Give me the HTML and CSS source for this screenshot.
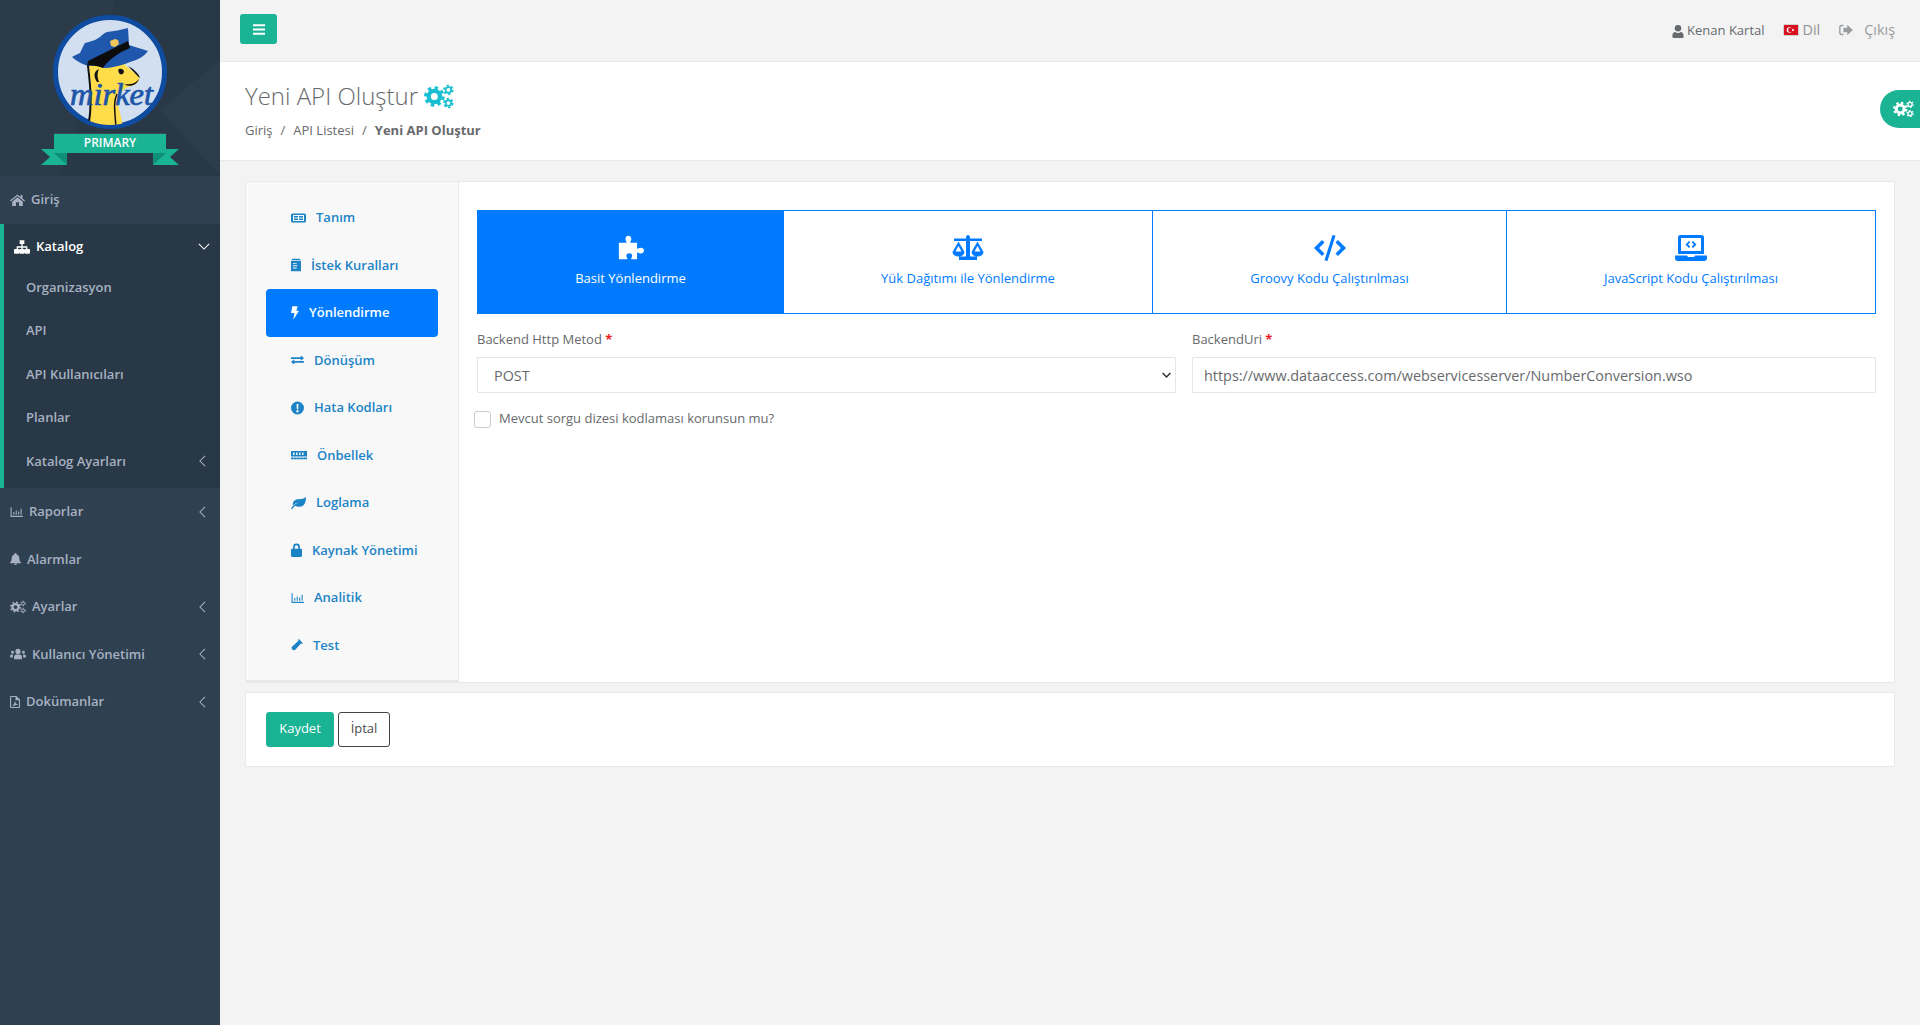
FILE: index.html
```html
<!DOCTYPE html>
<html lang="tr">
<head>
<meta charset="utf-8">
<title>Yeni API Oluştur</title>
<link rel="stylesheet" href="styles.css">
</head>
<body>
<svg class="sprite" xmlns="http://www.w3.org/2000/svg">
  <symbol id="i-home" viewBox="0 0 24 20"><path d="M12 1 0 10.800l1.300 1.600L12 3.600l10.700 8.800 1.300-1.600-4-3.300V2h-3v3.100zM12 5.600 3.500 12.600V19.500h6v-6h5v6h6v-6.900z"/></symbol>
  <symbol id="i-sitemap" viewBox="0 0 24 20"><path d="M8.500 0h7v5.500h-2.500V9H20v4h2.500a1.500 1.500 0 0 1 1.500 1.500v4a1.500 1.500 0 0 1-1.500 1.500h-5a1.500 1.500 0 0 1-1.500-1.500v-4a1.500 1.500 0 0 1 1.500-1.500H18v-2h-5v2h1.500a1.500 1.500 0 0 1 1.500 1.500v4a1.500 1.500 0 0 1-1.500 1.500h-5A1.500 1.500 0 0 1 8 18.500v-4A1.500 1.500 0 0 1 9.500 13H11v-2H6v2h.5A1.500 1.500 0 0 1 8 14.500v4A1.500 1.500 0 0 1 6.500 20h-5A1.500 1.500 0 0 1 0 18.500v-4A1.500 1.500 0 0 1 1.500 13H4V9h7V5.500H8.500z"/></symbol>
  <symbol id="i-chart" viewBox="0 0 24 20"><path d="M1 1h2v16h21v2H1zM6 10h2v5H6zM10.500 7h2v8h-2zM15 9h2v6h-2zM19.500 4h2v11h-2z"/></symbol>
  <symbol id="i-bell" viewBox="0 0 20 22"><path d="M10 0a2 2 0 0 0-2 2v.8A7 7 0 0 0 3 9.500c0 5.500-2 6.500-3 8V18.500h20v-1c-1-1.500-3-2.500-3-8a7 7 0 0 0-5-6.700V2a2 2 0 0 0-2-2zM7.500 19.500a2.500 2.500 0 0 0 5 0z"/></symbol>
  <symbol id="i-cogs" viewBox="0 0 32 26">
    <g fill="none" stroke="currentColor">
      <circle cx="11" cy="13" r="6" stroke-width="4.500"/>
      <circle cx="11" cy="13" r="9.300" stroke-width="3.400" stroke-dasharray="3.650 3.650"/>
      <circle cx="26" cy="6" r="3" stroke-width="1.900"/>
      <circle cx="26" cy="6" r="4.700" stroke-width="1.800" stroke-dasharray="2.460 2.460"/>
      <circle cx="26" cy="20" r="3" stroke-width="1.900"/>
      <circle cx="26" cy="20" r="4.700" stroke-width="1.800" stroke-dasharray="2.460 2.460"/>
    </g>
  </symbol>
  <symbol id="i-users" viewBox="0 0 28 20"><circle cx="14" cy="5.500" r="4.500"/><path d="M7 16.500C7 12 9.500 11 11 11h6c1.500 0 4 1 4 5.500V19H7z"/><circle cx="4.500" cy="7" r="2.500"/><circle cx="23.500" cy="7" r="2.500"/><path d="M0 15c0-3 1.500-4 3-4h2.500C4.500 12 5.300 13.500 5 16H1a1 1 0 0 1-1-1zM28 15c0-3-1.500-4-3-4h-2.500c1 1 .2 2.500.500 5h4a1 1 0 0 0 1-1z"/></symbol>
  <symbol id="i-pdf" viewBox="0 0 18 22"><path fill-rule="evenodd" d="M2 0h9.500L18 6.500V20a2 2 0 0 1-2 2H2a2 2 0 0 1-2-2V2a2 2 0 0 1 2-2zm0 2v18h14V8h-6V2z"/><path d="M4 18c2-1 3.500-3.500 4.500-7 .3-1.200 1.500-1 1.300.5-.2 1.500 2 3.500 4.200 3.500v1.300c-3 0-5.500.5-8.500 2.500z"/></symbol>
  <symbol id="i-bars" viewBox="0 0 14 12"><path d="M0 0h14v2.200H0zM0 4.900h14v2.200H0zM0 9.800h14V12H0z"/></symbol>
  <symbol id="i-user" viewBox="0 0 14 16"><circle cx="7" cy="4" r="4"/><path d="M0 14c0-3.500 1.500-5.500 3.500-5.500 1 .8 2.200 1.200 3.500 1.200s2.500-.4 3.500-1.200c2 0 3.500 2 3.500 5.500a2 2 0 0 1-2 2H2a2 2 0 0 1-2-2z"/></symbol>
  <symbol id="i-signout" viewBox="0 0 16 14"><path d="M5 1H3a3 3 0 0 0-3 3v6a3 3 0 0 0 3 3h2v-1.600H3A1.400 1.400 0 0 1 1.600 10V4A1.400 1.400 0 0 1 3 2.600h2zM9.500 1 16 7l-6.500 6V9.500H5v-5h4.500z"/></symbol>
  <symbol id="i-card" viewBox="0 0 30 20"><path fill-rule="evenodd" d="M3 1h24a3 3 0 0 1 3 3v12a3 3 0 0 1-3 3H3a3 3 0 0 1-3-3V4a3 3 0 0 1 3-3zM4 4v12h22V4zM6 6h8v3H6zM6 11h8v3H6zM16 6h8v3h-8zM16 11h8v3h-8z"/></symbol>
  <symbol id="i-book" viewBox="0 0 16 20"><path d="M2 0h12l1 2H1zM0 3h16v17H0zM3 7v1.500h6V7zM3 10.500V12h7v-1.500zM3 14v1.500h6V14z" fill-rule="evenodd"/></symbol>
  <symbol id="i-bolt" viewBox="0 0 12 20"><path d="M2 0h8L8 6.500h4L3.500 20 5 10H0z"/></symbol>
  <symbol id="i-exchange" viewBox="0 0 24 20"><path d="M0 5h18V1.500L24 6.500l-6 5V8H0zM24 12H6V8.500L0 13.500l6 5V15h18z"/></symbol>
  <symbol id="i-alert" viewBox="0 0 20 20"><path fill-rule="evenodd" d="M10 0a10 10 0 1 1 0 20 10 10 0 0 1 0-20zM8.500 4l.4 8h2.200l.4-8zM10 13.200a1.800 1.800 0 1 0 0 3.600 1.800 1.800 0 0 0 0-3.600z"/></symbol>
  <symbol id="i-memory" viewBox="0 0 32 18"><path fill-rule="evenodd" d="M0 1h32v11H0zM4 4v5h3V4zM10 4v5h3V4zM16 4v5h3V4zM22 4v5h3V4zM0 14h32v3.500H0zM5 14v1.500h1.500V14zM11 14v1.500h1.500V14zM17 14v1.500h1.500V14zM23 14v1.500h1.500V14z"/></symbol>
  <symbol id="i-leaf" viewBox="0 0 24 20"><path d="M24 0c0 8-2 16-11 16-2.500 0-4.500-.7-6-1.800C5 15.500 3 17.500 1.700 20L0 19c2.500-5 7-8.500 13-10-4.500.5-8 2.500-10 4.500C2 8 6 4 12 4c5 0 9-1 12-4z"/></symbol>
  <symbol id="i-lock" viewBox="0 0 16 20"><path d="M3 8V5.500a5 5 0 0 1 10 0V8h1.500A1.500 1.500 0 0 1 16 9.500v9a1.500 1.500 0 0 1-1.500 1.500h-13A1.500 1.500 0 0 1 0 18.500v-9A1.500 1.500 0 0 1 1.500 8zm2.500 0h5V5.500a2.500 2.500 0 0 0-5 0z"/></symbol>
  <symbol id="i-vial" viewBox="0 0 20 20"><path d="M13 0l7 7-1.800 1.200L17 7 7.500 17.500a3.700 3.700 0 0 1-5.300-5.200L12.500 3 11.500 1.800z"/></symbol>
  <symbol id="i-puzzle" viewBox="0 0 30 30"><path d="M1 9h8c1 0 1-1 .3-2C8 5 8.500 1 12 1s4 4 2.700 6c-.7 1-.7 2 .3 2h7v6c0 1 1 1 2 .3 2-1.300 6-.8 6 2.700s-4 4-6 2.700c-1-.7-2-.7-2 .3v7h-6c-1 0-1-1-.3-2 1.300-2 .8-5-2.700-5s-4 3-2.700 5c.7 1 .7 2-.3 2H1z"/></symbol>
  <symbol id="i-scale" viewBox="0 0 32 26"><path fill-rule="evenodd" d="M14.500 3.500a2 2 0 1 1 3 0H30v2.500H18V21.500h7V25H7v-3.500h7V6H2V3.500zM6.500 6.500 12.500 17a6 4.500 0 0 1-12 0zM3.500 16.500h6L6.500 11zM25.500 6.500 31.500 17a6 4.500 0 0 1-12 0zM22.500 16.500h6l-3-5.500z"/></symbol>
  <symbol id="i-code" viewBox="0 0 32 26"><path d="M8 5 0 13l8 8 2.500-2.500L5 13l5.500-5.500zM24 5l8 8-8 8-2.500-2.500L27 13l-5.500-5.500zM18.500 0l3 .8L13.500 26l-3-.8z"/></symbol>
  <symbol id="i-laptop" viewBox="0 0 32 26"><path fill-rule="evenodd" d="M5.500 0h21A2.500 2.500 0 0 1 29 2.500V19H3V2.500A2.500 2.500 0 0 1 5.500 0zM6 3v13h20V3zM0 20.500h12l1 1.500h6l1-1.500h12V23a3 3 0 0 1-3 3H3a3 3 0 0 1-3-3zM14 6 10.500 9.500 14 13l1.300-1.300-2.200-2.200 2.200-2.200zM18 6l3.500 3.500L18 13l-1.300-1.300 2.200-2.200-2.200-2.200z"/></symbol>
  <symbol id="i-chev-left" viewBox="0 0 8 14"><path d="M7 1 1 7l6 6" fill="none" stroke="currentColor" stroke-width="1.200"/></symbol>
  <symbol id="i-chev-down" viewBox="0 0 14 8"><path d="M1 1l6 6 6-6" fill="none" stroke="currentColor" stroke-width="1.200"/></symbol>
</svg>

<div class="app">
  <aside class="sidebar">
    <div class="brand">
      <svg class="brand-logo" viewBox="0 0 220 176" xmlns="http://www.w3.org/2000/svg">
        <defs><clipPath id="disc"><circle cx="110" cy="72" r="53"/></clipPath></defs>
        <path d="M115 0 60 176H0V0z" fill="#2b3b4a"/>
        <path d="M220 60 160 110 220 176z" fill="#2c3c4b"/>
        <circle cx="110" cy="72" r="54.500" fill="#d1dff0" stroke="#0e4ca1" stroke-width="5"/>
        <g clip-path="url(#disc)">
          <path d="M89 66C92 90 92 110 88 128H123C121 112 116 104 118 95 122 90 127 87 131 86 136 85 140 81 139 77 134 72 128 68 122 62z" fill="#fedc4a"/>
          <path d="M88 66C91 90 92 108 88 128" fill="none" stroke="#111" stroke-width="2"/>
          <path d="M116 128C115 112 113 102 117 94" fill="none" stroke="#111" stroke-width="1.500"/>
          <path d="M119 69c3-1 5 1 5 3-1 3-4 3-5 1-1-2-1-3 0-4zM128 66c6 3 11 8 12 12-2-1-5-5-12-12zM124 84c5 1 11 0 15-5-2 6-9 9-15 5zM97 82c-4-6-3-11 2-13-2 4-2 8 0 13z" fill="#111"/>
          <path d="M72 57C75 55 78 54 80 53 82 49 83 46 85 43 89 42 92 41 95 40L100 37C102 35 104 33 107 32 114 31 121 30 128 28L129 45C135 47 142 49 148 51 144 57 137 60 130 62 120 66 110 68 104 68 98 65 92 65 88 66 82 64 76 61 72 57z" fill="#1e57ac"/>
          <path d="M88 61 128 41 130 48C118 53 108 60 103 68 98 66 92 65 87 66z" fill="#0c0c0c"/>
          <path d="M110 41l5-2 3 1 1 4-4 3-4-1z" fill="#f2c75a"/>
        </g>
        <text class="brand-word" x="70" y="105" textLength="83" lengthAdjust="spacingAndGlyphs">mirket</text>
        <path d="M41 149H54V153H67V165H41L50 157z" fill="#1ab394"/>
        <path d="M179 149H166V153H153V165H179L170 157z" fill="#1ab394"/>
        <path d="M54 153H67V165z" fill="#0f8f77"/>
        <path d="M166 153H153V165z" fill="#0f8f77"/>
        <rect x="54" y="133" width="112" height="20" fill="#1ab394"/>
        <rect x="54" y="133" width="112" height="1" fill="#3a4b56"/>
        <text class="brand-badge" x="110" y="147" text-anchor="middle">PRIMARY</text>
      </svg>
    </div>
    <nav class="menu">
      <a class="menu-item"><svg class="ico w14"><use href="#i-home"/></svg><span>Giriş</span></a>
      <div class="menu-group">
        <a class="menu-item menu-item-active"><svg class="ico w16"><use href="#i-sitemap"/></svg><span>Katalog</span><svg class="chev-down"><use href="#i-chev-down"/></svg></a>
        <a class="sub-item">Organizasyon</a>
        <a class="sub-item">API</a>
        <a class="sub-item">API Kullanıcıları</a>
        <a class="sub-item">Planlar</a>
        <a class="sub-item">Katalog Ayarları<svg class="chev-left"><use href="#i-chev-left"/></svg></a>
      </div>
      <a class="menu-item"><svg class="ico w13"><use href="#i-chart"/></svg><span>Raporlar</span><svg class="chev-left"><use href="#i-chev-left"/></svg></a>
      <a class="menu-item"><svg class="ico w11"><use href="#i-bell"/></svg><span>Alarmlar</span></a>
      <a class="menu-item"><svg class="ico w16"><use href="#i-cogs"/></svg><span>Ayarlar</span><svg class="chev-left"><use href="#i-chev-left"/></svg></a>
      <a class="menu-item"><svg class="ico w16"><use href="#i-users"/></svg><span>Kullanıcı Yönetimi</span><svg class="chev-left"><use href="#i-chev-left"/></svg></a>
      <a class="menu-item"><svg class="ico w10"><use href="#i-pdf"/></svg><span>Dokümanlar</span><svg class="chev-left"><use href="#i-chev-left"/></svg></a>
    </nav>
  </aside>

  <div class="main">
    <header class="topbar">
      <button class="toggle" type="button"><svg class="toggle-ico"><use href="#i-bars"/></svg></button>
      <div class="top-links">
        <span class="top-user"><svg class="top-ico-user"><use href="#i-user"/></svg>Kenan Kartal</span>
        <span class="top-lang"><span class="flag"><svg viewBox="0 0 14 10" class="flag-svg"><rect width="14" height="10" fill="#d8101f"/><circle cx="5.500" cy="5" r="2.800" fill="#fff"/><circle cx="6.300" cy="5" r="2.200" fill="#d8101f"/><circle cx="9" cy="5" r="1" fill="#fff"/></svg></span>Dil</span>
        <span class="top-exit"><svg class="top-ico-exit"><use href="#i-signout"/></svg>Çıkış</span>
      </div>
    </header>

    <section class="heading">
      <h1 class="title">Yeni API Oluştur <svg class="title-ico"><use href="#i-cogs"/></svg></h1>
      <ol class="crumbs">
        <li>Giriş</li>
        <li class="sep">/</li>
        <li>API Listesi</li>
        <li class="sep">/</li>
        <li class="crumb-now">Yeni API Oluştur</li>
      </ol>
      <div class="float-gear"><svg class="float-ico"><use href="#i-cogs"/></svg></div>
    </section>

    <div class="content">
      <section class="card card-tabs">
        <nav class="side-tabs">
          <a class="side-tab"><svg class="st-ico st15"><use href="#i-card"/></svg>Tanım</a>
          <a class="side-tab"><svg class="st-ico st10"><use href="#i-book"/></svg>İstek Kuralları</a>
          <a class="side-tab side-tab-active"><svg class="st-ico st8"><use href="#i-bolt"/></svg>Yönlendirme</a>
          <a class="side-tab"><svg class="st-ico st13"><use href="#i-exchange"/></svg>Dönüşüm</a>
          <a class="side-tab"><svg class="st-ico st13"><use href="#i-alert"/></svg>Hata Kodları</a>
          <a class="side-tab"><svg class="st-ico st16"><use href="#i-memory"/></svg>Önbellek</a>
          <a class="side-tab"><svg class="st-ico st15"><use href="#i-leaf"/></svg>Loglama</a>
          <a class="side-tab"><svg class="st-ico st11"><use href="#i-lock"/></svg>Kaynak Yönetimi</a>
          <a class="side-tab"><svg class="st-ico st13"><use href="#i-chart"/></svg>Analitik</a>
          <a class="side-tab"><svg class="st-ico st12"><use href="#i-vial"/></svg>Test</a>
        </nav>
        <div class="pane">
          <div class="route-tabs">
            <a class="route route-1 route-active"><svg class="route-ico"><use href="#i-puzzle"/></svg><span>Basit Yönlendirme</span></a>
            <a class="route route-2"><svg class="route-ico"><use href="#i-scale"/></svg><span>Yük Dağıtımı ile Yönlendirme</span></a>
            <a class="route route-3"><svg class="route-ico"><use href="#i-code"/></svg><span>Groovy Kodu Çalıştırılması</span></a>
            <a class="route route-4"><svg class="route-ico"><use href="#i-laptop"/></svg><span>JavaScript Kodu Çalıştırılması</span></a>
          </div>
          <div class="form-row">
            <div class="field">
              <label class="field-label" for="method">Backend Http Metod <b class="req">*</b></label>
              <div class="select-wrap">
                <select class="control control-select" id="method"><option>POST</option></select>
                <svg class="select-chev" viewBox="0 0 14 8"><path class="select-chev-path" d="M1 1l6 6 6-6"/></svg>
              </div>
            </div>
            <div class="field">
              <label class="field-label" for="uri">BackendUri <b class="req">*</b></label>
              <input class="control control-input" id="uri" type="text" value="https://www.dataaccess.com/webservicesserver/NumberConversion.wso">
            </div>
          </div>
          <label class="check"><span class="check-box"></span>Mevcut sorgu dizesi kodlaması korunsun mu?</label>
        </div>
      </section>

      <section class="card card-actions">
        <button class="btn btn-save" type="button">Kaydet</button>
        <button class="btn btn-cancel" type="button">İptal</button>
      </section>
    </div>
  </div>
</div>
</body>
</html>
```
FILE: styles.css
```css
* { box-sizing: border-box; }
html, body { margin: 0; padding: 0; height: 100%; }
body {
  font-family: "Open Sans", "Liberation Sans", sans-serif;
  font-size: 13px;
  line-height: 1.5;
  color: #676a6c;
  background: #f3f3f4;
  overflow: hidden;
}
.sprite { display: none; }
svg { fill: currentColor; }

.app { display: flex; min-height: 1025px; }

/* Sidebar */
.sidebar { width: 220px; flex: none; background: #2f4050; color: #a7b1c2; }
.brand { height: 176px; background: #293846; }
.brand-logo { display: block; width: 220px; height: 176px; }
.brand-word { font-family: "Liberation Serif", serif; font-style: italic; font-weight: 400; font-size: 31px; fill: #1d55a8; stroke: #1d55a8; stroke-width: .7px; }
.brand-badge { font-size: 12px; font-weight: 600; fill: #fff; }

.menu-item {
  display: flex;
  align-items: center;
  gap: 6px;
  padding: 14px 10px;
  height: 47.500px;
  font-weight: 600;
  color: #a7b1c2;
}
.menu-group { background: #293846; border-left: 4px solid #1ab394; padding-bottom: 5px; height: 264.500px; }
.menu-item-active { color: #fff; height: 42px; padding: 12px 10px 8px; }
.sub-item {
  display: flex;
  align-items: center;
  height: 43.500px;
  padding: 0 10px 0 22px;
  font-weight: 600;
  color: #a7b1c2;
}
.ico { height: 14px; flex: none; }
.w10 { width: 10px; }
.w11 { width: 11px; }
.w13 { width: 13px; }
.w14 { width: 15px; }
.w16 { width: 16px; }
.chev-left { width: 7px; height: 12px; margin-left: auto; margin-right: 4px; flex: none; }
.sub-item .chev-left { margin-right: 4px; }
.chev-down { width: 12px; height: 7px; margin-left: auto; margin-right: 0; flex: none; }

/* Main */
.main { flex: 1; min-width: 0; }
.topbar {
  height: 62px;
  border-bottom: 1px solid #e7eaec;
  display: flex;
  align-items: flex-start;
  justify-content: space-between;
  padding: 14px 25px 0 20px;
}
.toggle {
  width: 37px;
  height: 30px;
  background: #1ab394;
  border: 0;
  border-radius: 3px;
  color: #fff;
  padding: 0;
  display: flex;
  align-items: center;
  justify-content: center;
}
.toggle-ico { width: 12px; height: 11px; }
.top-links { display: flex; align-items: center; height: 32px; font-size: 13px; }
.top-user { display: flex; align-items: center; gap: 3px; color: #676a6c; margin-right: 19px; padding-top: 2px; }
.top-ico-user { width: 12px; height: 13px; }
.top-lang { display: flex; align-items: center; gap: 5px; color: #8f9193; font-size: 14.400px; margin-right: 19px; }
.flag { display: block; width: 14px; height: 10px; box-shadow: 0 0 1px rgba(0, 0, 0, .8); }
.flag-svg { display: block; width: 14px; height: 10px; }
.top-exit { display: flex; align-items: center; gap: 11px; color: #999c9e; font-size: 14.400px; }
.top-ico-exit { width: 14px; height: 12px; }

.heading {
  position: relative;
  height: 99px;
  background: #fff;
  border-bottom: 1px solid #e7eaec;
  padding: 17px 25px 0;
}
.title { margin: 0; font-size: 24px; font-weight: 300; line-height: 34px; color: #676a6c; display: flex; align-items: center; gap: 6px; }
.title-ico { width: 30px; height: 25px; color: #17bfd1; }
.crumbs { list-style: none; margin: 7px 0 0; padding: 0; display: flex; gap: 8px; line-height: 20px; }
.crumb-now { font-weight: 700; }
.float-gear {
  position: absolute;
  top: 28px;
  right: 0;
  width: 40px;
  height: 38px;
  background: #1ab394;
  border-radius: 20px 0 0 20px;
  color: #fff;
  display: flex;
  align-items: center;
  padding-left: 13px;
}
.float-ico { width: 21px; height: 18px; flex: none; }

.content { padding: 20px 25px 0 25px; }
.card { background: #fff; border: 1px solid #e7eaec; }
.card-tabs { display: flex; height: 502px; }
.side-tabs {
  width: 213px;
  flex: none;
  background: #f8f8f8;
  border-right: 1px solid #e7eaec;
  border-bottom: 2px solid #e7eaec;
  padding: 12px 20px 0;
}
.side-tab {
  display: flex;
  align-items: center;
  gap: 10px;
  height: 47.500px;
  padding-left: 25px;
  border-radius: 4px;
  font-weight: 600;
  color: #1c84c6;
}
.side-tab-active { background: #007bff; color: #fff; }
.st-ico { height: 14px; flex: none; }
.st8 { width: 8px; }
.st10 { width: 10px; }
.st11 { width: 11px; }
.st12 { width: 12px; }
.st13 { width: 13px; }
.st15 { width: 15px; }
.st16 { width: 16px; }

.pane { flex: 1; min-width: 0; padding: 28px 18px 0 18px; }
.route-tabs { display: flex; height: 104px; border: 1px solid #007bff; }
.route {
  display: flex;
  flex-direction: column;
  align-items: center;
  padding-top: 24px;
  color: #007bff;
  border-right: 1px solid #007bff;
}
.route span { margin-top: 7px; line-height: 20px; }
.route-1 { width: 306px; }
.route-2 { width: 369px; }
.route-3 { width: 354px; }
.route-4 { flex: 1; border-right: 0; }
.route-active { background: #007bff; color: #fff; }
.route-ico { width: 32px; height: 26px; }

.form-row { display: grid; grid-template-columns: 699px 1fr; gap: 16px; margin-top: 15px; }
.field-label { display: block; line-height: 20px; margin-bottom: 8px; }
.req { color: #ed1c24; font-weight: 700; }
.select-wrap { position: relative; }
.control {
  display: block;
  width: 100%;
  height: 36px;
  background: #fff;
  border: 1px solid #e5e6e7;
  border-radius: 1px;
  font-family: inherit;
  font-size: 14.400px;
  color: #676a6c;
  outline: 0;
}
.control-select { appearance: none; -webkit-appearance: none; padding: 0 16px; }
.control-input { padding: 0 11px; }
.select-chev { position: absolute; right: 5px; top: 15px; width: 9px; height: 6px; pointer-events: none; }
.select-chev-path { fill: none; stroke: #333; stroke-width: 2.400; }
.check { display: flex; align-items: center; gap: 8px; margin: 15px 0 0 -3px; line-height: 16px; }
.check-box { width: 17px; height: 17px; margin-top: 3px; background: #fff; border: 1px solid #c9ccd0; border-radius: 3px; flex: none; }

.card-actions { display: flex; gap: 4px; height: 75px; margin-top: 9px; padding: 19px 20px 0; }
.btn { height: 35px; border-radius: 3px; font-family: inherit; font-size: 13px; padding: 0 0 3px; }
.btn-save { width: 68px; background: #1ab394; border: 1px solid #1ab394; color: #fff; font-weight: 500; }
.btn-cancel { width: 52px; background: #fff; border: 1px solid #444; color: #4a4c4e; }
```
